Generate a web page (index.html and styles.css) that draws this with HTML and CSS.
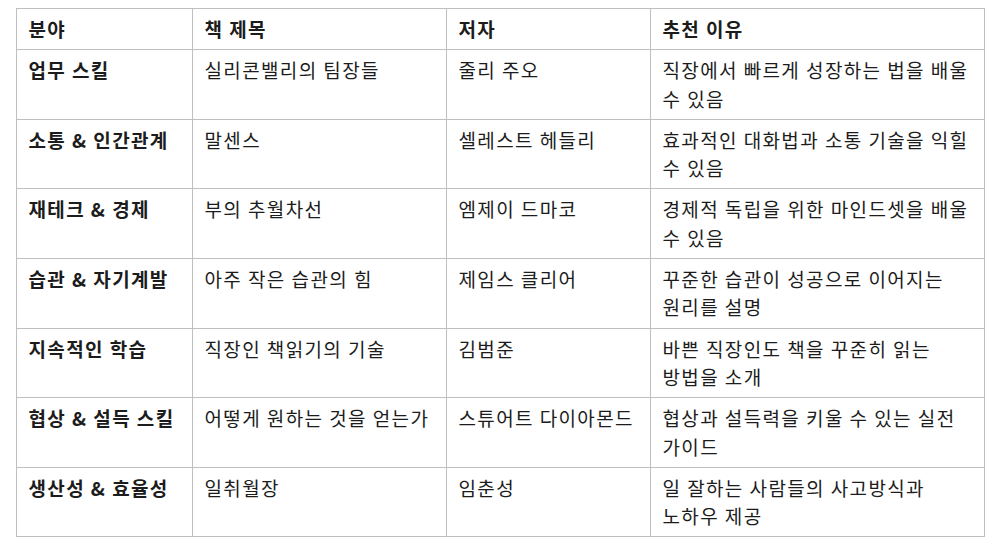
FILE: index.html
```html
<!DOCTYPE html>
<html lang="ko">
<head>
<meta charset="utf-8">
<link rel="stylesheet" href="styles.css">
</head>
<body>
<table class="books">
  <colgroup>
    <col class="c1"><col class="c2"><col class="c3"><col class="c4">
  </colgroup>
  <thead>
    <tr><th>분야</th><th>책 제목</th><th>저자</th><th>추천 이유</th></tr>
  </thead>
  <tbody>
    <tr><td class="cat">업무 스킬</td><td>실리콘밸리의 팀장들</td><td>줄리 주오</td><td>직장에서 빠르게 성장하는 법을 배울 수 있음</td></tr>
    <tr><td class="cat">소통 &amp; 인간관계</td><td>말센스</td><td>셀레스트 헤들리</td><td>효과적인 대화법과 소통 기술을 익힐 수 있음</td></tr>
    <tr><td class="cat">재테크 &amp; 경제</td><td>부의 추월차선</td><td>엠제이 드마코</td><td>경제적 독립을 위한 마인드셋을 배울 수 있음</td></tr>
    <tr><td class="cat">습관 &amp; 자기계발</td><td>아주 작은 습관의 힘</td><td>제임스 클리어</td><td>꾸준한 습관이 성공으로 이어지는 원리를 설명</td></tr>
    <tr><td class="cat">지속적인 학습</td><td>직장인 책읽기의 기술</td><td>김범준</td><td>바쁜 직장인도 책을 꾸준히 읽는 방법을 소개</td></tr>
    <tr><td class="cat">협상 &amp; 설득 스킬</td><td>어떻게 원하는 것을 얻는가</td><td>스튜어트 다이아몬드</td><td>협상과 설득력을 키울 수 있는 실전 가이드</td></tr>
    <tr><td class="cat">생산성 &amp; 효율성</td><td>일취월장</td><td>임춘성</td><td>일 잘하는 사람들의 사고방식과 노하우 제공</td></tr>
  </tbody>
</table>
</body>
</html>
```

FILE: styles.css
```css
html, body {
  margin: 0;
  padding: 0;
  background: #ffffff;
}

body {
  padding: 8px;
  font-family: "Noto Sans CJK KR", "Noto Sans", sans-serif;
  color: #1c1c1c;
}

.books {
  width: 968px;
  margin: 0 auto;
  border-collapse: collapse;
  table-layout: fixed;
  font-size: 19px;
  line-height: 28.3px;
  letter-spacing: 1.35px;
  word-spacing: -0.8px;
  word-break: keep-all;
}

.c1 { width: 176px; }
.c2 { width: 254px; }
.c3 { width: 204px; }
.c4 { width: 334px; }

.books th,
.books td {
  border: 1px solid #bfbfbf;
  padding: 6px 12px;
  text-align: left;
  vertical-align: top;
}

.books th {
  font-weight: 700;
}

.books td.cat {
  font-weight: 700;
}
```
